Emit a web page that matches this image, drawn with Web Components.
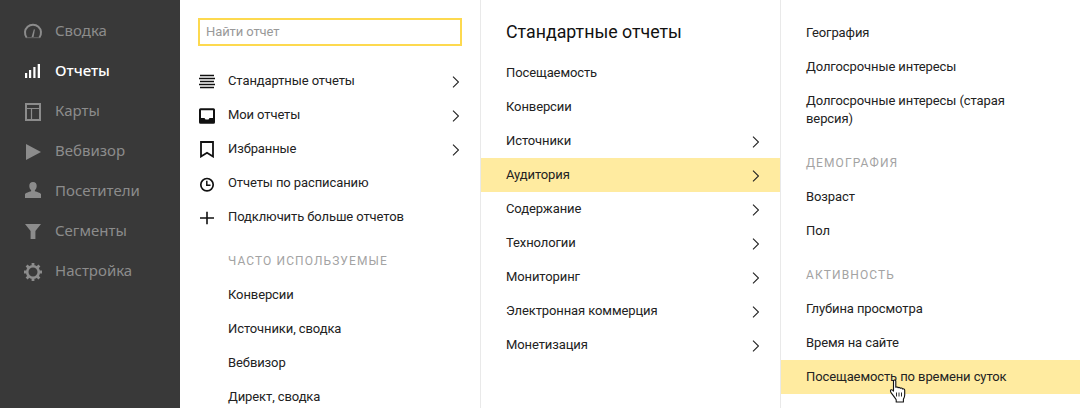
<!DOCTYPE html>
<html lang="ru">
<head>
<meta charset="utf-8">
<title>Отчеты</title>
<style>
  html, body { margin: 0; padding: 0; height: 100%; overflow: hidden; background: #fff; }
  body { font-family: Roboto, "Noto Sans", sans-serif; }
  report-app { height: 408px; }
</style>
</head>
<body>
<report-app>
  <side-nav slot="nav">
    <nav-item label="Сводка" icon="gauge"></nav-item>
    <nav-item label="Отчеты" icon="bars" active></nav-item>
    <nav-item label="Карты" icon="map"></nav-item>
    <nav-item label="Вебвизор" icon="play"></nav-item>
    <nav-item label="Посетители" icon="user"></nav-item>
    <nav-item label="Сегменты" icon="funnel"></nav-item>
    <nav-item label="Настройка" icon="gear"></nav-item>
  </side-nav>

  <menu-col style="--col-w:300px;--pad-top:18px">
    <search-box placeholder="Найти отчет"></search-box>
    <menu-row icon="lines" arrow style="--row-left:48px;margin-top:18px">Стандартные отчеты</menu-row>
    <menu-row icon="inbox" arrow style="--row-left:48px">Мои отчеты</menu-row>
    <menu-row icon="bookmark" arrow style="--row-left:48px">Избранные</menu-row>
    <menu-row icon="clock" style="--row-left:48px">Отчеты по расписанию</menu-row>
    <menu-row icon="plus" style="--row-left:48px">Подключить больше отчетов</menu-row>
    <section-title style="--row-left:48px">Часто используемые</section-title>
    <menu-row style="--row-left:48px">Конверсии</menu-row>
    <menu-row style="--row-left:48px">Источники, сводка</menu-row>
    <menu-row style="--row-left:48px">Вебвизор</menu-row>
    <menu-row style="--row-left:48px">Директ, сводка</menu-row>
  </menu-col>

  <menu-col bordered style="--col-w:300px;--pad-top:20px">
    <col-title>Стандартные отчеты</col-title>
    <menu-row>Посещаемость</menu-row>
    <menu-row>Конверсии</menu-row>
    <menu-row arrow>Источники</menu-row>
    <menu-row arrow selected>Аудитория</menu-row>
    <menu-row arrow>Содержание</menu-row>
    <menu-row arrow>Технологии</menu-row>
    <menu-row arrow>Мониторинг</menu-row>
    <menu-row arrow>Электронная коммерция</menu-row>
    <menu-row arrow>Монетизация</menu-row>
  </menu-col>

  <menu-col bordered style="--col-w:300px;--pad-top:16px;--row-right:50px">
    <menu-row>География</menu-row>
    <menu-row>Долгосрочные интересы</menu-row>
    <menu-row>Долгосрочные интересы (старая версия)</menu-row>
    <section-title>Демография</section-title>
    <menu-row>Возраст</menu-row>
    <menu-row>Пол</menu-row>
    <section-title>Активность</section-title>
    <menu-row>Глубина просмотра</menu-row>
    <menu-row>Время на сайте</menu-row>
    <menu-row selected>Посещаемость по времени суток<hand-cursor></hand-cursor></menu-row>
  </menu-col>
</report-app>

<script>
  const NAV_ICONS = {
    gauge: '<path d="M3.600 18.500A8 8 0 1 1 16.400 18.500" fill="none" stroke="currentColor" stroke-width="2"/><path d="M3 18.700h14" stroke="currentColor" stroke-width=".8" opacity=".7"/><path d="M8.600 18l2.300-7.800 1 .3-1.300 7.500z" fill="currentColor"/>',
    bars: '<path d="M2 14h2.200v5H2zM6 11h2.200v8H6zM10.300 8h2.200v11h-2.200zM14.700 5H17v14h-2.300z" fill="currentColor"/>',
    map: '<path d="M3 5h14v16H3z" fill="none" stroke="currentColor" stroke-width="2"/><path d="M3 9.500h14M8.500 9.500V21" fill="none" stroke="currentColor" stroke-width="1.200"/>',
    play: '<path d="M3 5l15 8-15 8z" fill="currentColor"/>',
    user: '<path d="M10 3c2.400 0 3.700 1.700 3.700 3.900 0 1.800-.8 3.300-1.800 4.100v1.300c2.400.7 5 1.500 6.100 2.600V19H2v-4.100c1.100-1.100 3.700-1.900 6.100-2.600V11c-1-.8-1.800-2.300-1.800-4.100C6.300 4.700 7.600 3 10 3z" fill="currentColor"/>',
    funnel: '<path d="M2 5h16l-5.600 7v8H7.600v-8z" fill="currentColor"/>',
    gear: '<circle cx="10" cy="13" r="5.800" fill="none" stroke="currentColor" stroke-width="2.600"/><path d="M10 4v3M10 19v3M1 13h3M16 13h3M3.600 6.600l2.200 2.200M14.200 17.200l2.200 2.200M3.600 19.400l2.200-2.200M14.200 8.800l2.200-2.200" stroke="currentColor" stroke-width="2.800"/>'
  };

  const ROW_ICONS = {
    lines: '<path d="M1 3.500h14M0 6.500h16M1 9.500h14M0 12.500h16M1 15.500h14" stroke="currentColor" stroke-width="1.400"/>',
    inbox: '<path fill-rule="evenodd" d="M1.500 2.300h13A1.500 1.500 0 0 1 16 3.800v12.400a1.500 1.500 0 0 1-1.500 1.500h-13A1.500 1.500 0 0 1 0 16.200V3.800a1.500 1.500 0 0 1 1.500-1.500zM2 4.300V12h3.500l1 1.500h3l1-1.500H14V4.300z" fill="currentColor"/>',
    bookmark: '<path d="M2 2h12v14.500l-6-3.800-6 3.800z" fill="none" stroke="currentColor" stroke-width="1.800"/>',
    clock: '<circle cx="8" cy="10.700" r="6.200" fill="none" stroke="currentColor" stroke-width="1.700"/><path d="M7.800 6.800v4.500h3.700" fill="none" stroke="currentColor" stroke-width="1.500"/>',
    plus: '<path d="M1 10h14M8 3.700v12.600" stroke="currentColor" stroke-width="1.600"/>'
  };

  class ReportApp extends HTMLElement {
    constructor() {
      super();
      this.attachShadow({ mode: 'open' });
      this.shadowRoot.innerHTML = `
        <style>
          :host { display: flex; align-items: stretch; overflow: hidden; width: 1080px; }
          ::slotted(side-nav) { flex: none; }
        </style>
        <slot name="nav"></slot>
        <slot></slot>
      `;
    }
  }

  class SideNav extends HTMLElement {
    constructor() {
      super();
      this.attachShadow({ mode: 'open' });
      this.shadowRoot.innerHTML = `
        <style>
          :host { display: flex; flex-direction: column; box-sizing: border-box; width: 180px; padding-top: 10px; background: #393939; }
        </style>
        <slot></slot>
      `;
    }
  }

  class NavItem extends HTMLElement {
    constructor() {
      super();
      this.attachShadow({ mode: 'open' });
      this.shadowRoot.innerHTML = `
        <style>
          :host { display: flex; align-items: center; height: 40px; padding-left: 23px; color: #8c8c8c; font: 15px/20px "Noto Sans", "Open Sans", sans-serif; }
          :host([active]) { color: #fff; font-weight: 500; }
          svg { flex: none; width: 20px; height: 22px; margin-right: 12px; }
        </style>
        <svg viewBox="0 0 20 22"></svg><span></span>
      `;
    }
    connectedCallback() {
      this.shadowRoot.querySelector('svg').innerHTML = NAV_ICONS[this.getAttribute('icon')] || '';
      this.shadowRoot.querySelector('span').textContent = this.getAttribute('label');
    }
  }

  class MenuCol extends HTMLElement {
    constructor() {
      super();
      this.attachShadow({ mode: 'open' });
      this.shadowRoot.innerHTML = `
        <style>
          :host { display: flex; flex-direction: column; flex: none; box-sizing: border-box; width: var(--col-w); padding-top: var(--pad-top); }
          :host([bordered]) { border-left: 1px solid #e9e9e9; }
        </style>
        <slot></slot>
      `;
    }
  }

  class SearchBox extends HTMLElement {
    constructor() {
      super();
      this.attachShadow({ mode: 'open' });
      this.shadowRoot.innerHTML = `
        <style>
          :host { display: block; margin: 0 18px; }
          input { display: block; box-sizing: border-box; width: 264px; height: 28px; padding: 0 6px 2px; border: 2px solid #fdd94f; outline: 0; border-radius: 0; background: #fff; font: 13px Roboto, sans-serif; letter-spacing: -.1px; }
          input::placeholder { color: #999; opacity: 1; }
        </style>
        <input type="text">
      `;
    }
    connectedCallback() {
      this.shadowRoot.querySelector('input').placeholder = this.getAttribute('placeholder');
    }
  }

  class MenuRow extends HTMLElement {
    constructor() {
      super();
      this.attachShadow({ mode: 'open' });
      this.shadowRoot.innerHTML = `
        <style>
          :host { display: flex; align-items: center; position: relative; box-sizing: border-box; min-height: 34px; padding: 8px var(--row-right, 21px) 8px var(--row-left, 25px); color: #222; font: 13px/18px Roboto, sans-serif; letter-spacing: -.1px; }
          :host([selected]) { background: #ffeba0; }
          .ico { display: none; position: absolute; left: 19px; top: 8px; width: 18px; height: 18px; color: #111; }
          :host([icon]) .ico { display: block; }
          .text { flex: 1; min-width: 0; position: relative; }
          .arrow { display: none; flex: none; width: 8px; height: 12px; margin-top: 2px; color: #222; }
          :host([arrow]) .arrow { display: block; }
        </style>
        <svg class="ico" viewBox="0 0 18 18"></svg>
        <span class="text"><slot></slot></span>
        <svg class="arrow" viewBox="0 0 8 12"><path d="M2 .7L7.500 6 2 11.300" fill="none" stroke="currentColor" stroke-width="1.100"/></svg>
      `;
    }
    connectedCallback() {
      if (this.hasAttribute('icon')) {
        this.shadowRoot.querySelector('.ico').innerHTML = ROW_ICONS[this.getAttribute('icon')];
      }
    }
  }

  class SectionTitle extends HTMLElement {
    constructor() {
      super();
      this.attachShadow({ mode: 'open' });
      this.shadowRoot.innerHTML = `
        <style>
          :host { display: block; padding: 18px 17px 8px var(--row-left, 25px); color: #a3a3a3; font: 12px/18px Roboto, sans-serif; letter-spacing: 1.100px; text-transform: uppercase; }
        </style>
        <slot></slot>
      `;
    }
  }

  class ColTitle extends HTMLElement {
    constructor() {
      super();
      this.attachShadow({ mode: 'open' });
      this.shadowRoot.innerHTML = `
        <style>
          :host { display: block; padding: 0 25px 12px; color: #111; font: 17.800px/24px Roboto, sans-serif; }
        </style>
        <slot></slot>
      `;
    }
  }

  // курсор поверх строки
  class HandCursor extends HTMLElement {
    constructor() {
      super();
      this.attachShadow({ mode: 'open' });
      this.shadowRoot.innerHTML = `
        <style>
          :host { display: block; position: absolute; left: 83px; top: 11px; width: 18px; height: 24px; }
          svg { display: block; }
        </style>
        <svg width="18" height="24" viewBox="0 0 18 24">
          <path d="M4.500 1.500c.8-.8 2-.6 2.300.5v6.300c.8-.5 1.900-.4 2.300.4.700-.5 1.800-.3 2.200.5.800-.4 1.900-.2 2.200.8.800-.4 2-.1 2.200 1v5c0 2-.6 3-1.300 4.200v2.800H7.200v-2.200C5.500 18 3.800 16.200 2 13.500c-.8-1.200-.7-2.300.2-2.700.8-.3 1.500.2 2.300 1.300z" fill="#fff" stroke="#111" stroke-width="1.100" stroke-linejoin="round"/>
          <path d="M7.500 13.500v4M10 13.500v4M12.500 13.500v4" stroke="#111" stroke-width=".9"/>
        </svg>
      `;
    }
  }

  customElements.define('report-app', ReportApp);
  customElements.define('side-nav', SideNav);
  customElements.define('nav-item', NavItem);
  customElements.define('menu-col', MenuCol);
  customElements.define('search-box', SearchBox);
  customElements.define('menu-row', MenuRow);
  customElements.define('section-title', SectionTitle);
  customElements.define('col-title', ColTitle);
  customElements.define('hand-cursor', HandCursor);
</script>
</body>
</html>
